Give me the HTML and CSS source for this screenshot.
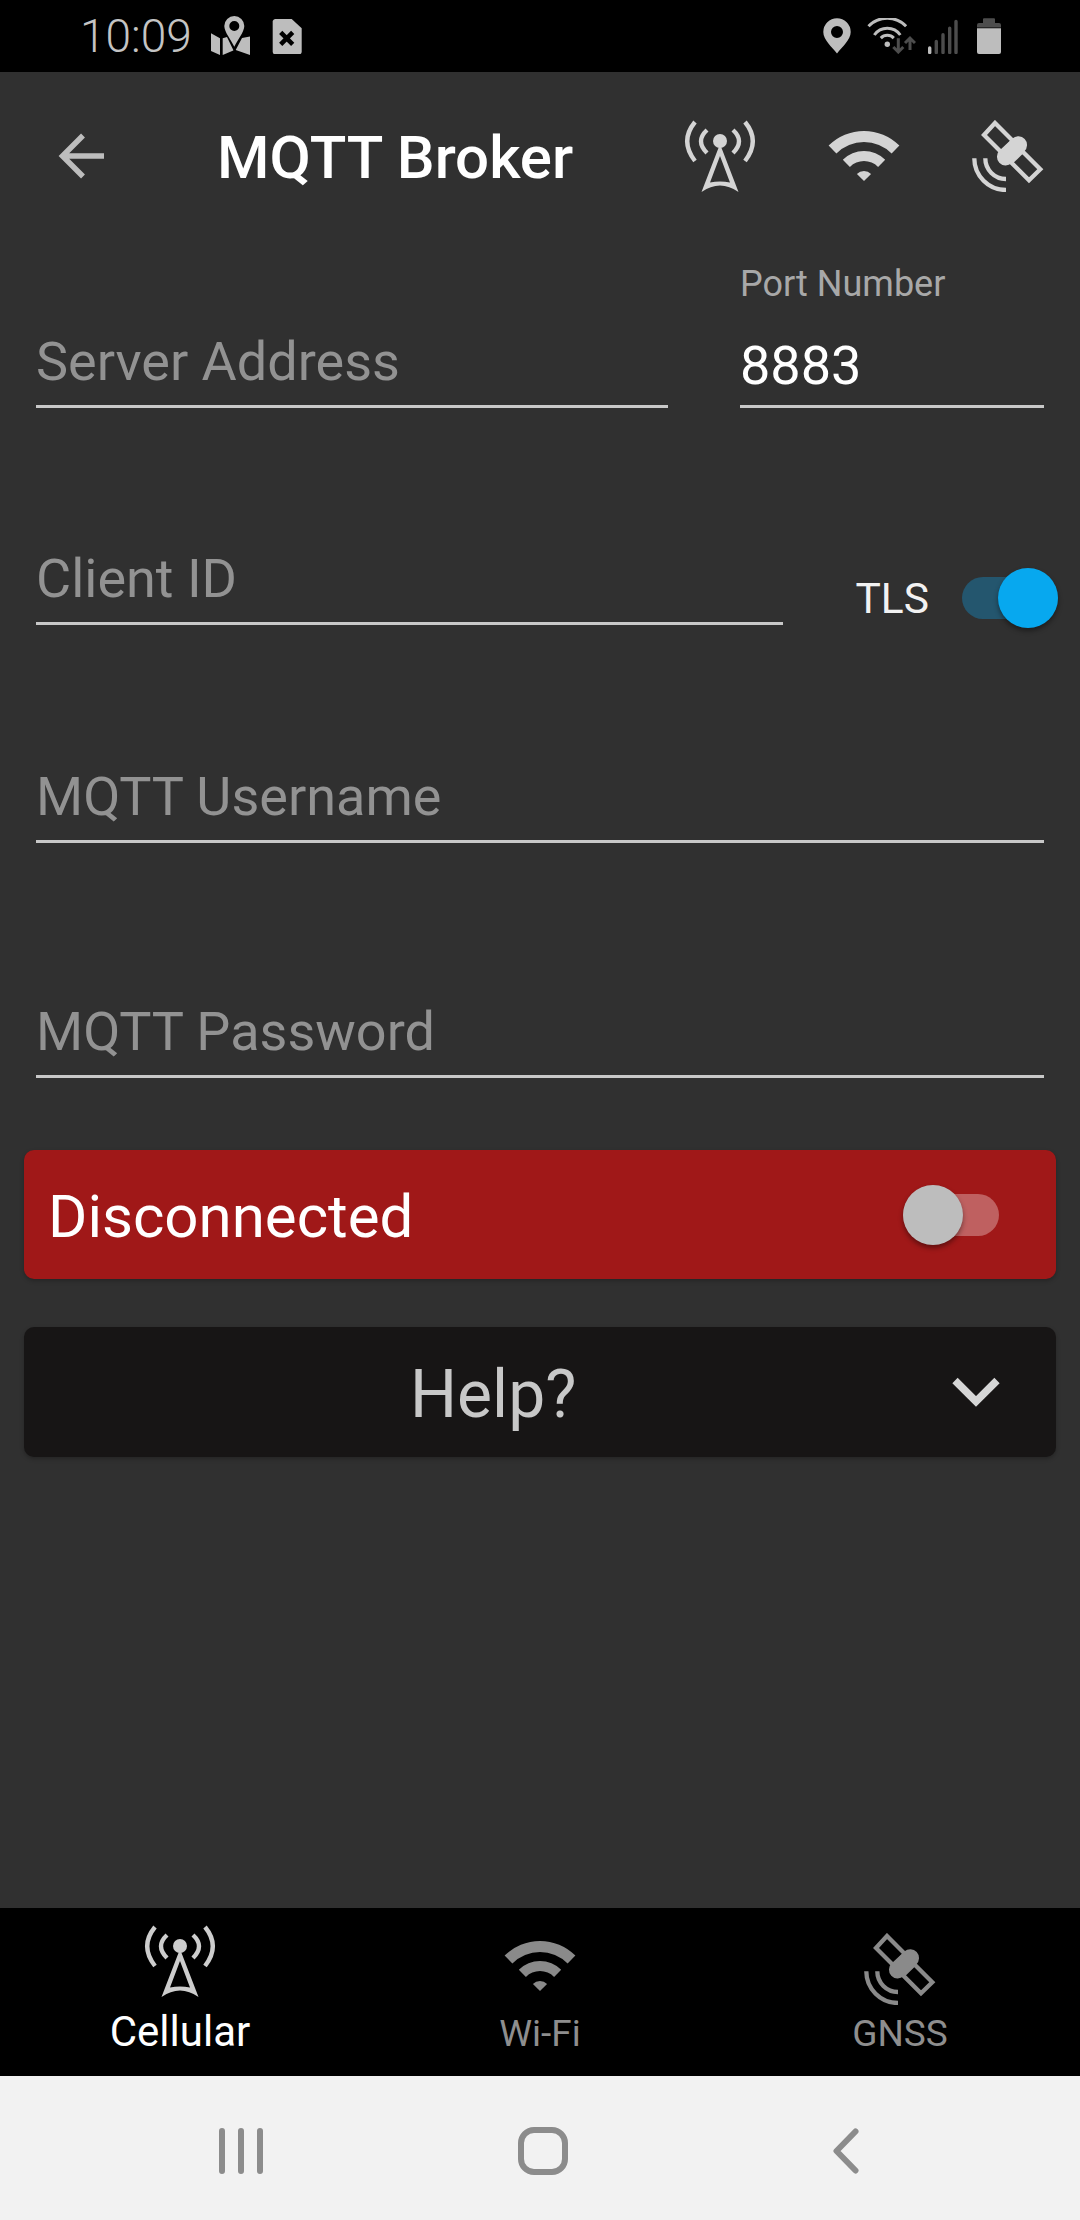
FILE: index.html
```html
<!DOCTYPE html>
<html lang="en">
<head>
<meta charset="utf-8">
<title>MQTT Broker</title>
<link rel="stylesheet" href="styles.css">
</head>
<body>
<svg class="defs" width="0" height="0" aria-hidden="true">
  <symbol id="tower" viewBox="0 0 72 72">
    <circle cx="36" cy="21" r="7" fill="currentColor"/>
    <path fill-rule="evenodd" fill="currentColor" d="M36 24 L54.500 72 Q36 59 17.500 72 Z M36 36 L46 62.500 Q36 60.500 26 62.500 Z"/>
    <g fill="none" stroke="currentColor" stroke-width="4.400">
      <path d="M23 10 Q11 21 23 33"/>
      <path d="M49 10 Q61 21 49 33"/>
      <path d="M11 2 Q-4.600 21 11 41"/>
      <path d="M61 2 Q76.600 21 61 41"/>
    </g>
  </symbol>
  <symbol id="wifi" viewBox="0 0 72 54">
    <g fill="currentColor">
      <path d="M.6 16.600 A50 50 0 0 1 71.400 16.600 L63.600 24.400 A39 39 0 0 0 8.400 24.400Z"/>
      <path d="M14.800 30.800 A30 30 0 0 1 57.200 30.800 L50.100 37.900 A20 20 0 0 0 21.900 37.900Z"/>
      <path d="M28.900 44.900 A10 10 0 0 1 43.100 44.900 L36 52Z"/>
    </g>
  </symbol>
  <symbol id="sat" viewBox="0 0 72 72">
    <g fill="none" stroke="currentColor" stroke-width="4.300">
      <path d="M23 3 L12 15 L30 33 L41 21 Z"/>
      <path d="M68.300 49.300 L57 60.300 L39 42.300 L50.300 31.300 Z"/>
      <path d="M2.300 38.300 A31.700 31.700 0 0 0 34 70"/>
      <path d="M13.300 38.300 A20.700 20.700 0 0 0 34 59"/>
    </g>
    <path d="M46.300 25 L33.700 36.700" stroke="currentColor" stroke-width="17.500" stroke-linecap="round" fill="none"/>
  </symbol>
</svg>

<div class="status">
  <span class="clock">10:09</span>
  <svg class="st-map" width="41" height="40" viewBox="0 0 41 40">
    <path fill-rule="evenodd" fill="#bdbdbd" d="M24.300 0 A10 10 0 0 1 34.300 10 C34.300 16 27.500 24 24.300 30.700 C21.100 24 14.300 16 14.300 10 A10 10 0 0 1 24.300 0Z M24.300 5 A5 5 0 1 0 24.300 15 A5 5 0 1 0 24.300 5Z"/>
    <path fill="#bdbdbd" d="M1 17.300 L10 22.300 V39 L1 35Z M12.700 22.300 L17 21 L23.300 34 V34.500 L12.700 39Z M25.700 34 L32 22 L40 20.500 V39 Z"/>
  </svg>
  <svg class="st-file" width="31" height="36" viewBox="0 0 31 36">
    <path fill="#bdbdbd" d="M3 1 H19.700 L29.700 10.300 V33.500 a3 3 0 0 1 -3 3 H3.700 a3 3 0 0 1 -3 -3 V3 a3 3 0 0 1 2.300 -2Z"/>
    <path d="M8.700 14.300 L20.700 26.300 M20.700 14.300 L8.700 26.300" stroke="#000" stroke-width="4.500" fill="none"/>
  </svg>
  <svg class="st-loc" width="28" height="36" viewBox="0 0 28 36">
    <path fill-rule="evenodd" fill="#bdbdbd" d="M14 .3 A13.700 13.700 0 0 1 27.700 14 C27.700 22 19 29 14 35.500 C9 29 .3 22 .3 14 A13.700 13.700 0 0 1 14 .3Z M14 8 A6 6 0 1 0 14 20 A6 6 0 1 0 14 8Z"/>
  </svg>
  <svg class="st-wifi" width="49" height="36" viewBox="0 0 49 36">
    <g fill="none" stroke="#bdbdbd" stroke-width="3">
      <path d="M1.500 8.300 A26 26 0 0 1 39.100 8.300"/>
      <path d="M7.300 17 A16 16 0 0 1 33.300 17"/>
      <path d="M13.800 20.100 A9 9 0 0 1 26.800 20.100"/>
    </g>
    <circle cx="20.300" cy="26.300" r="2.700" fill="#bdbdbd"/>
    <path d="M31.300 20.300 V34 M26.300 29 L31.300 34 L36.300 29" stroke="#4d4d4d" stroke-width="3" fill="none"/>
    <path d="M43 32 V21 M38 25 L43 20 L48 25" stroke="#4d4d4d" stroke-width="3" fill="none"/>
  </svg>
  <svg class="st-bars" width="30" height="36" viewBox="0 0 30 36">
    <g stroke-width="3.400" stroke-linecap="round">
      <path d="M1.700 30 V34.500" stroke="#bdbdbd"/>
      <path d="M8.300 23.500 V34.500 M15 16.800 V34.500 M21.700 10.200 V34.500 M28 3.500 V34.500" stroke="#4d4d4d"/>
    </g>
  </svg>
  <svg class="st-batt" width="24" height="36" viewBox="0 0 24 36">
    <path d="M7 .3 H17 a1 1 0 0 1 1 1 V5 H22 a2 2 0 0 1 2 2 V9.500 H0 V7 a2 2 0 0 1 2 -2 H6 V1.300 a1 1 0 0 1 1 -1Z" fill="#4d4d4d"/>
    <path d="M0 10.300 H24 V34 a2 2 0 0 1 -2 2 H2 a2 2 0 0 1 -2 -2Z" fill="#bdbdbd"/>
  </svg>
</div>

<main class="screen">
  <header class="appbar">
    <svg class="back" width="48" height="48" viewBox="0 0 48 48">
      <path d="M46 24 H5 M25 3.500 L4.500 24 L25 44.500" fill="none" stroke="#bdbdbd" stroke-width="5.500"/>
    </svg>
    <h1 class="title">MQTT Broker</h1>
    <div class="actions">
      <svg class="ic ic-tower"><use href="#tower"/></svg>
      <svg class="ic ic-wifi"><use href="#wifi"/></svg>
      <svg class="ic ic-sat"><use href="#sat"/></svg>
    </div>
  </header>

  <section class="form">
    <div class="row row-server">
      <div class="field field-server"><span class="ph">Server Address</span></div>
      <div class="field field-port">
        <span class="float">Port Number</span>
        <span class="val">8883</span>
      </div>
    </div>
    <div class="row row-client">
      <div class="field field-client"><span class="ph">Client ID</span></div>
      <div class="tls">
        <span class="tls-label">TLS</span>
        <div class="switch switch-on"><span class="track"></span><span class="knob"></span></div>
      </div>
    </div>
    <div class="row row-user">
      <div class="field field-wide"><span class="ph">MQTT Username</span></div>
    </div>
    <div class="row row-pass">
      <div class="field field-wide"><span class="ph">MQTT Password</span></div>
    </div>
  </section>

  <section class="card card-red">
    <span class="card-text">Disconnected</span>
    <div class="switch switch-off"><span class="track"></span><span class="knob"></span></div>
  </section>

  <section class="card card-help">
    <span class="help-text">Help?</span>
    <svg class="chev" width="48" height="30" viewBox="0 0 48 30">
      <path d="M3 3.500 L24 24.500 L45 3.500" fill="none" stroke="#d6d6d6" stroke-width="7.500"/>
    </svg>
  </section>
</main>

<nav class="tabs">
  <div class="tab tab-active">
    <div class="tab-ic"><svg class="ic ic-tower tab-tower"><use href="#tower"/></svg></div>
    <span class="tab-label">Cellular</span>
  </div>
  <div class="tab">
    <div class="tab-ic"><svg class="ic ic-wifi tab-wifi"><use href="#wifi"/></svg></div>
    <span class="tab-label">Wi-Fi</span>
  </div>
  <div class="tab">
    <div class="tab-ic"><svg class="ic ic-sat tab-sat"><use href="#sat"/></svg></div>
    <span class="tab-label">GNSS</span>
  </div>
</nav>

<footer class="sysnav">
  <svg class="nav-recents" width="44" height="46" viewBox="0 0 44 46">
    <path d="M3 3 V43 M22 3 V43 M41 3 V43" stroke="#8c8c8c" stroke-width="6" stroke-linecap="round" fill="none"/>
  </svg>
  <svg class="nav-home" width="50" height="48" viewBox="0 0 50 48">
    <rect x="3" y="3" width="44" height="42" rx="13" fill="none" stroke="#8c8c8c" stroke-width="6"/>
  </svg>
  <svg class="nav-back" width="26" height="46" viewBox="0 0 26 46">
    <path d="M22.500 3.500 L3.500 23 L22.500 42.500" stroke="#8c8c8c" stroke-width="6" stroke-linecap="round" stroke-linejoin="round" fill="none"/>
  </svg>
</footer>
</body>
</html>
```

FILE: styles.css
```css
* { box-sizing: border-box; }
html, body { margin: 0; padding: 0; }
body {
  width: 1080px;
  height: 2220px;
  display: flex;
  flex-direction: column;
  background: #303030;
  font-family: Roboto, "Noto Sans", sans-serif;
  overflow: hidden;
}
.defs { position: absolute; }

/* status bar */
.status {
  height: 72px;
  background: #000;
  display: flex;
  align-items: center;
  padding-left: 80px;
  flex: none;
}
.clock { font-size: 46px; font-weight: 300; color: #c4c4c4; line-height: 72px; width: 130px; }
.st-file { margin-left: 21px; }
.st-loc { margin-left: auto; }
.st-wifi { margin-left: 16px; }
.st-bars { margin-left: 12px; }
.st-batt { margin-left: 19px; margin-right: 79px; }

/* app bar */
.screen { flex: 1; display: flex; flex-direction: column; }
.appbar { height: 168px; display: flex; align-items: center; padding-left: 58px; padding-right: 36px; flex: none; }
.title { margin: 4px 0 0 111px; font-size: 60px; font-weight: 500; color: #fff; white-space: nowrap; line-height: 1; }
.back { flex: none; }
.actions { margin-left: auto; display: flex; align-items: center; color: #d4d4d4; }
.ic { display: block; flex: none; }
.ic-tower { width: 72px; height: 72px; }
.ic-wifi { width: 72px; height: 54px; }
.ic-sat { width: 72px; height: 72px; }
.actions .ic-wifi, .actions .ic-sat { margin-left: 72px; }

/* form */
.form { padding: 0 36px; }
.row { display: flex; align-items: flex-end; }
.row-server { height: 168px; justify-content: space-between; }
.row-client { height: 217px; }
.row-user { height: 218px; }
.row-pass { height: 235px; }
.field { border-bottom: 3px solid #c8c8c8; display: flex; flex-direction: column; padding-bottom: 15px; }
.field-server { width: 632px; }
.field-port { width: 304px; padding-bottom: 11px; }
.field-client { width: 747px; }
.field-wide { width: 100%; }
.ph { font-size: 54px; line-height: 56px; color: #929292; }
.float { font-size: 36px; line-height: 42px; color: #a8a8a8; margin-bottom: 33px; }
.val { font-size: 54px; line-height: 56px; color: #fff; }
.tls { margin-left: auto; margin-right: -14px; display: flex; align-items: center; align-self: flex-end; height: 80px; margin-bottom: -13px; }
.tls-label { font-size: 42.500px; color: #f2f2f2; margin-right: 33px; }

/* switches */
.switch { position: relative; width: 96px; height: 60px; flex: none; }
.track { position: absolute; left: 0; top: 9px; width: 96px; height: 42px; border-radius: 21px; }
.knob { position: absolute; top: 0; width: 60px; height: 60px; border-radius: 50%; box-shadow: 0 3px 5px rgba(0,0,0,.4); }
.switch-on .track { background: #24566e; }
.switch-on .knob { background: #07a8ef; right: 0; }
.switch-off .track { background: #bf6060; }
.switch-off .knob { background: #bdbdbd; left: 0; }

/* cards */
.card { margin: 0 24px; border-radius: 10px; display: flex; align-items: center; box-shadow: 0 2px 4px rgba(0,0,0,.25); }
.card-red { height: 129px; margin-top: 72px; background: #a01818; padding-left: 24px; padding-right: 57px; justify-content: space-between; }
.card-text { font-size: 60px; color: #fff; padding-top: 4px; }
.card-help { height: 130px; margin-top: 48px; background: #171515; position: relative; padding-left: 386px; }
.help-text { font-size: 66px; color: #c8c8c8; padding-top: 5px; }
.chev { position: absolute; left: 928px; top: 50px; }

/* bottom tabs */
.tabs { height: 168px; background: #000; display: grid; grid-template-columns: repeat(3, 1fr); flex: none; }
.tab { display: flex; flex-direction: column; align-items: center; color: #8a8a8a; }
.tab-active { color: #cdcdcd; }
.tab-ic { height: 96px; display: flex; align-items: center; padding-top: 6px; }
.tab-tower { margin-top: 3px; }
.tab-wifi { margin-top: 14px; }
.tab-sat { margin-top: 20px; }
.tab-label { font-size: 37px; line-height: 44px; color: #8e8e8e; margin-top: 8px; }
.tab-active .tab-label { font-size: 42px; color: #fff; margin-top: 6px; }

/* system nav */
.sysnav { height: 144px; background: #f2f2f2; display: flex; flex: none; align-items: center; padding-left: 219px; padding-top: 5px; }
.nav-home { margin-left: 255px; }
.nav-back { margin-left: 265px; }
```
